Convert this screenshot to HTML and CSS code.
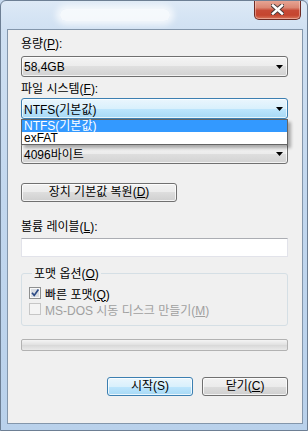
FILE: index.html
```html
<!DOCTYPE html>
<html lang="ko">
<head>
  <meta charset="UTF-8" />
  <meta name="viewport" content="width=device-width, initial-scale=1.0"/>
  <title>포맷</title>
  <link rel="stylesheet" href="styles.css">
</head>
<body>

  <div class="window">
    <div class="titlebar">
      <div class="title-glow"></div>
      <button class="close-btn" title="닫기">
        <svg width="13" height="11" viewBox="0 0 13 11">
          <path d="M2 1.5 L11 9.5 M11 1.5 L2 9.5" stroke="#4a3a3a" stroke-width="4.4" stroke-linecap="square" fill="none"/>
          <path d="M2 1.5 L11 9.5 M11 1.5 L2 9.5" stroke="#ffffff" stroke-width="2.5" stroke-linecap="square" fill="none"/>
        </svg>
      </button>
    </div>

    <div class="client">
      <label class="label label-capacity">용량(<u>P</u>):</label>
      <div class="combo combo-capacity">
        <span>58,4GB</span>
        <svg class="arrow" width="7" height="4"><polygon points="0,0 7,0 3.5,4" fill="#000"/></svg>
      </div>

      <label class="label label-fs">파일 시스템(<u>F</u>):</label>
      <div class="combo-wrap">
        <div class="combo combo-hot">
          <span>NTFS(기본값)</span>
          <svg class="arrow" width="7" height="4"><polygon points="0,0 7,0 3.5,4" fill="#000"/></svg>
        </div>
        <!-- open list covers the allocation-size label -->
        <ul class="dropdown">
          <li class="selected">NTFS(기본값)</li>
          <li>exFAT</li>
        </ul>
      </div>

      <div class="combo combo-unit">
        <span>4096바이트</span>
        <svg class="arrow" width="7" height="4"><polygon points="0,0 7,0 3.5,4" fill="#000"/></svg>
      </div>

      <button class="btn btn-restore">장치 기본값 복원(<u>D</u>)</button>

      <label class="label label-volume">볼륨 레이블(<u>L</u>):</label>
      <input class="text-input" type="text" value="">

      <div class="group">
        <div class="group-title">포맷 옵션(<u>O</u>)</div>
        <div class="check-row check-first">
          <svg class="checkbox" width="12" height="12" viewBox="0 0 12 12">
            <rect x="0.5" y="0.5" width="11" height="11" fill="#f7f7f7" stroke="#8e8f8f"/>
            <rect x="2" y="2" width="8" height="8" fill="#d9dde3"/>
            <path d="M3 5.8 L5.2 8.4 L9.4 2.6" stroke="#2c4a85" stroke-width="1.7" fill="none"/>
          </svg>
          <span>빠른 포맷(<u>Q</u>)</span>
        </div>
        <div class="check-row disabled">
          <svg class="checkbox" width="12" height="12" viewBox="0 0 12 12">
            <rect x="0.5" y="0.5" width="11" height="11" fill="#f4f4f4" stroke="#c6c6c6"/>
          </svg>
          <span>MS-DOS 시동 디스크 만들기(<u>M</u>)</span>
        </div>
      </div>

      <div class="progress"></div>

      <div class="actions">
        <button class="btn btn-default">시작(S)</button>
        <button class="btn">닫기(<u>C</u>)</button>
      </div>
    </div>
  </div>

</body>
</html>
```

FILE: styles.css
```css
body {
  margin: 0;
  background: #c6d9ee;
  font-family: "Liberation Sans", "Noto Sans CJK KR", sans-serif;
  font-size: 12px;
  color: #000;
}
.window {
  width: 308px;
  height: 431px;
  box-sizing: border-box;
  border: 1px solid #6d7f94;
  border-radius: 6px 6px 0 0;
  padding: 0 4px 6px 6px;
  display: flex;
  flex-direction: column;
  background: linear-gradient(180deg, #dde9f6 0, #cfe0f2 30px, #c2d7ee 200px, #b9d1eb 100%);
  overflow: hidden;
}
.titlebar {
  height: 28px;
  display: flex;
  justify-content: space-between;
  align-items: flex-start;
  flex-shrink: 0;
}
.title-glow {
  margin: 8px 0 0 53px;
  width: 110px;
  height: 12px;
  border-radius: 6px;
  background: rgba(255, 255, 255, 0.75);
  box-shadow: 0 0 6px 4px rgba(255, 255, 255, 0.7);
}
.close-btn {
  margin: -1px 2px 0 0;
  width: 47px;
  height: 20px;
  padding: 0;
  border: 1px solid #6e2b24;
  border-top: none;
  border-radius: 0 0 5px 5px;
  background: linear-gradient(180deg, #e8a898 0, #db8773 40%, #c74a36 55%, #c5452f 80%, #d8765c 100%);
  box-shadow: inset 0 0 0 1px rgba(255, 220, 210, 0.45);
  display: flex;
  align-items: center;
  justify-content: center;
}
.client {
  flex: 1;
  border: 1px solid #8396ab;
  background: #f0f0f0;
  padding: 7px 14px 0 13px;
  display: flex;
  flex-direction: column;
}
.label {
  display: block;
  line-height: 14px;
  height: 14px;
  white-space: nowrap;
}
.label-fs { margin-top: 5px; }
.label-volume { margin-top: 18px; }
u {
  text-decoration: underline;
  text-underline-offset: 1px;
}
.combo {
  box-sizing: border-box;
  height: 21px;
  border: 1px solid #707070;
  border-radius: 3px;
  padding: 0 4px 0 2px;
  display: flex;
  align-items: center;
  justify-content: space-between;
  background: linear-gradient(180deg, #f4f4f4 0, #ececec 50%, #dfdfdf 50%, #d2d2d2 100%);
  box-shadow: inset 0 0 0 1px rgba(255, 255, 255, 0.7);
}
.combo-capacity { margin-top: 5px; }
.combo-unit { margin-top: 24px; }
.combo-wrap {
  position: relative;
  margin-top: 2px;
}
.combo-hot {
  border-color: #3c7fb1;
  background: linear-gradient(180deg, #eaf6fd 0, #d9f0fc 50%, #bee6fd 50%, #a7d9f5 100%);
}
.dropdown {
  position: absolute;
  top: 21px;
  left: 0;
  right: 0;
  margin: 0;
  padding: 0;
  list-style: none;
  background: #fff;
  border: 1px solid #646464;
  box-shadow: 3px 3px 3px rgba(0, 0, 0, 0.3);
  z-index: 2;
}
.dropdown li {
  height: 12px;
  line-height: 12px;
  padding-left: 2px;
}
.dropdown .selected {
  background: #3399ff;
  color: #fff;
}
.btn {
  font: inherit;
  color: #000;
  height: 19px;
  padding: 0;
  border: 1px solid #707070;
  border-radius: 3px;
  background: linear-gradient(180deg, #f2f2f2 0, #ebebeb 50%, #dddddd 50%, #cfcfcf 100%);
  box-shadow: inset 0 0 0 1px rgba(255, 255, 255, 0.75);
  line-height: 15px;
}
.btn-restore {
  margin-top: 19px;
  width: 156px;
}
.btn-default {
  border-color: #3c7fb1;
  background: linear-gradient(180deg, #eaf6fd 0, #d9f0fc 50%, #bee6fd 50%, #a7d9f5 100%);
}
.text-input {
  margin: 4px 0 0;
  height: 19px;
  box-sizing: border-box;
  border: 1px solid #e2e3ea;
  border-top-color: #abadb3;
  background: #fff;
  padding: 0 2px;
  font: inherit;
}
.group {
  margin-top: 16px;
  border: 1px solid #d5dfe5;
  border-radius: 3px;
  padding: 0 0 8px 7px;
}
.group-title {
  margin: -7px 0 0 3px;
  padding: 0 2px;
  width: fit-content;
  line-height: 14px;
  background: #f0f0f0;
}
.check-row {
  height: 16px;
  display: flex;
  align-items: center;
  gap: 4px;
  white-space: nowrap;
}
.check-first { margin-top: 4px; }
.check-row.disabled { color: #a0a0a0; }
.checkbox { flex-shrink: 0; }
.progress {
  margin-top: 13px;
  height: 12px;
  box-sizing: border-box;
  border: 1px solid #b2b2b2;
  border-radius: 2px;
  background: linear-gradient(180deg, #f4f4f4 0, #e2e2e2 45%, #d9d9d9 55%, #e9e9e9 100%);
}
.actions {
  margin-top: 26px;
  display: flex;
  justify-content: flex-end;
  gap: 9px;
}
.actions .btn { width: 86px; }
```
